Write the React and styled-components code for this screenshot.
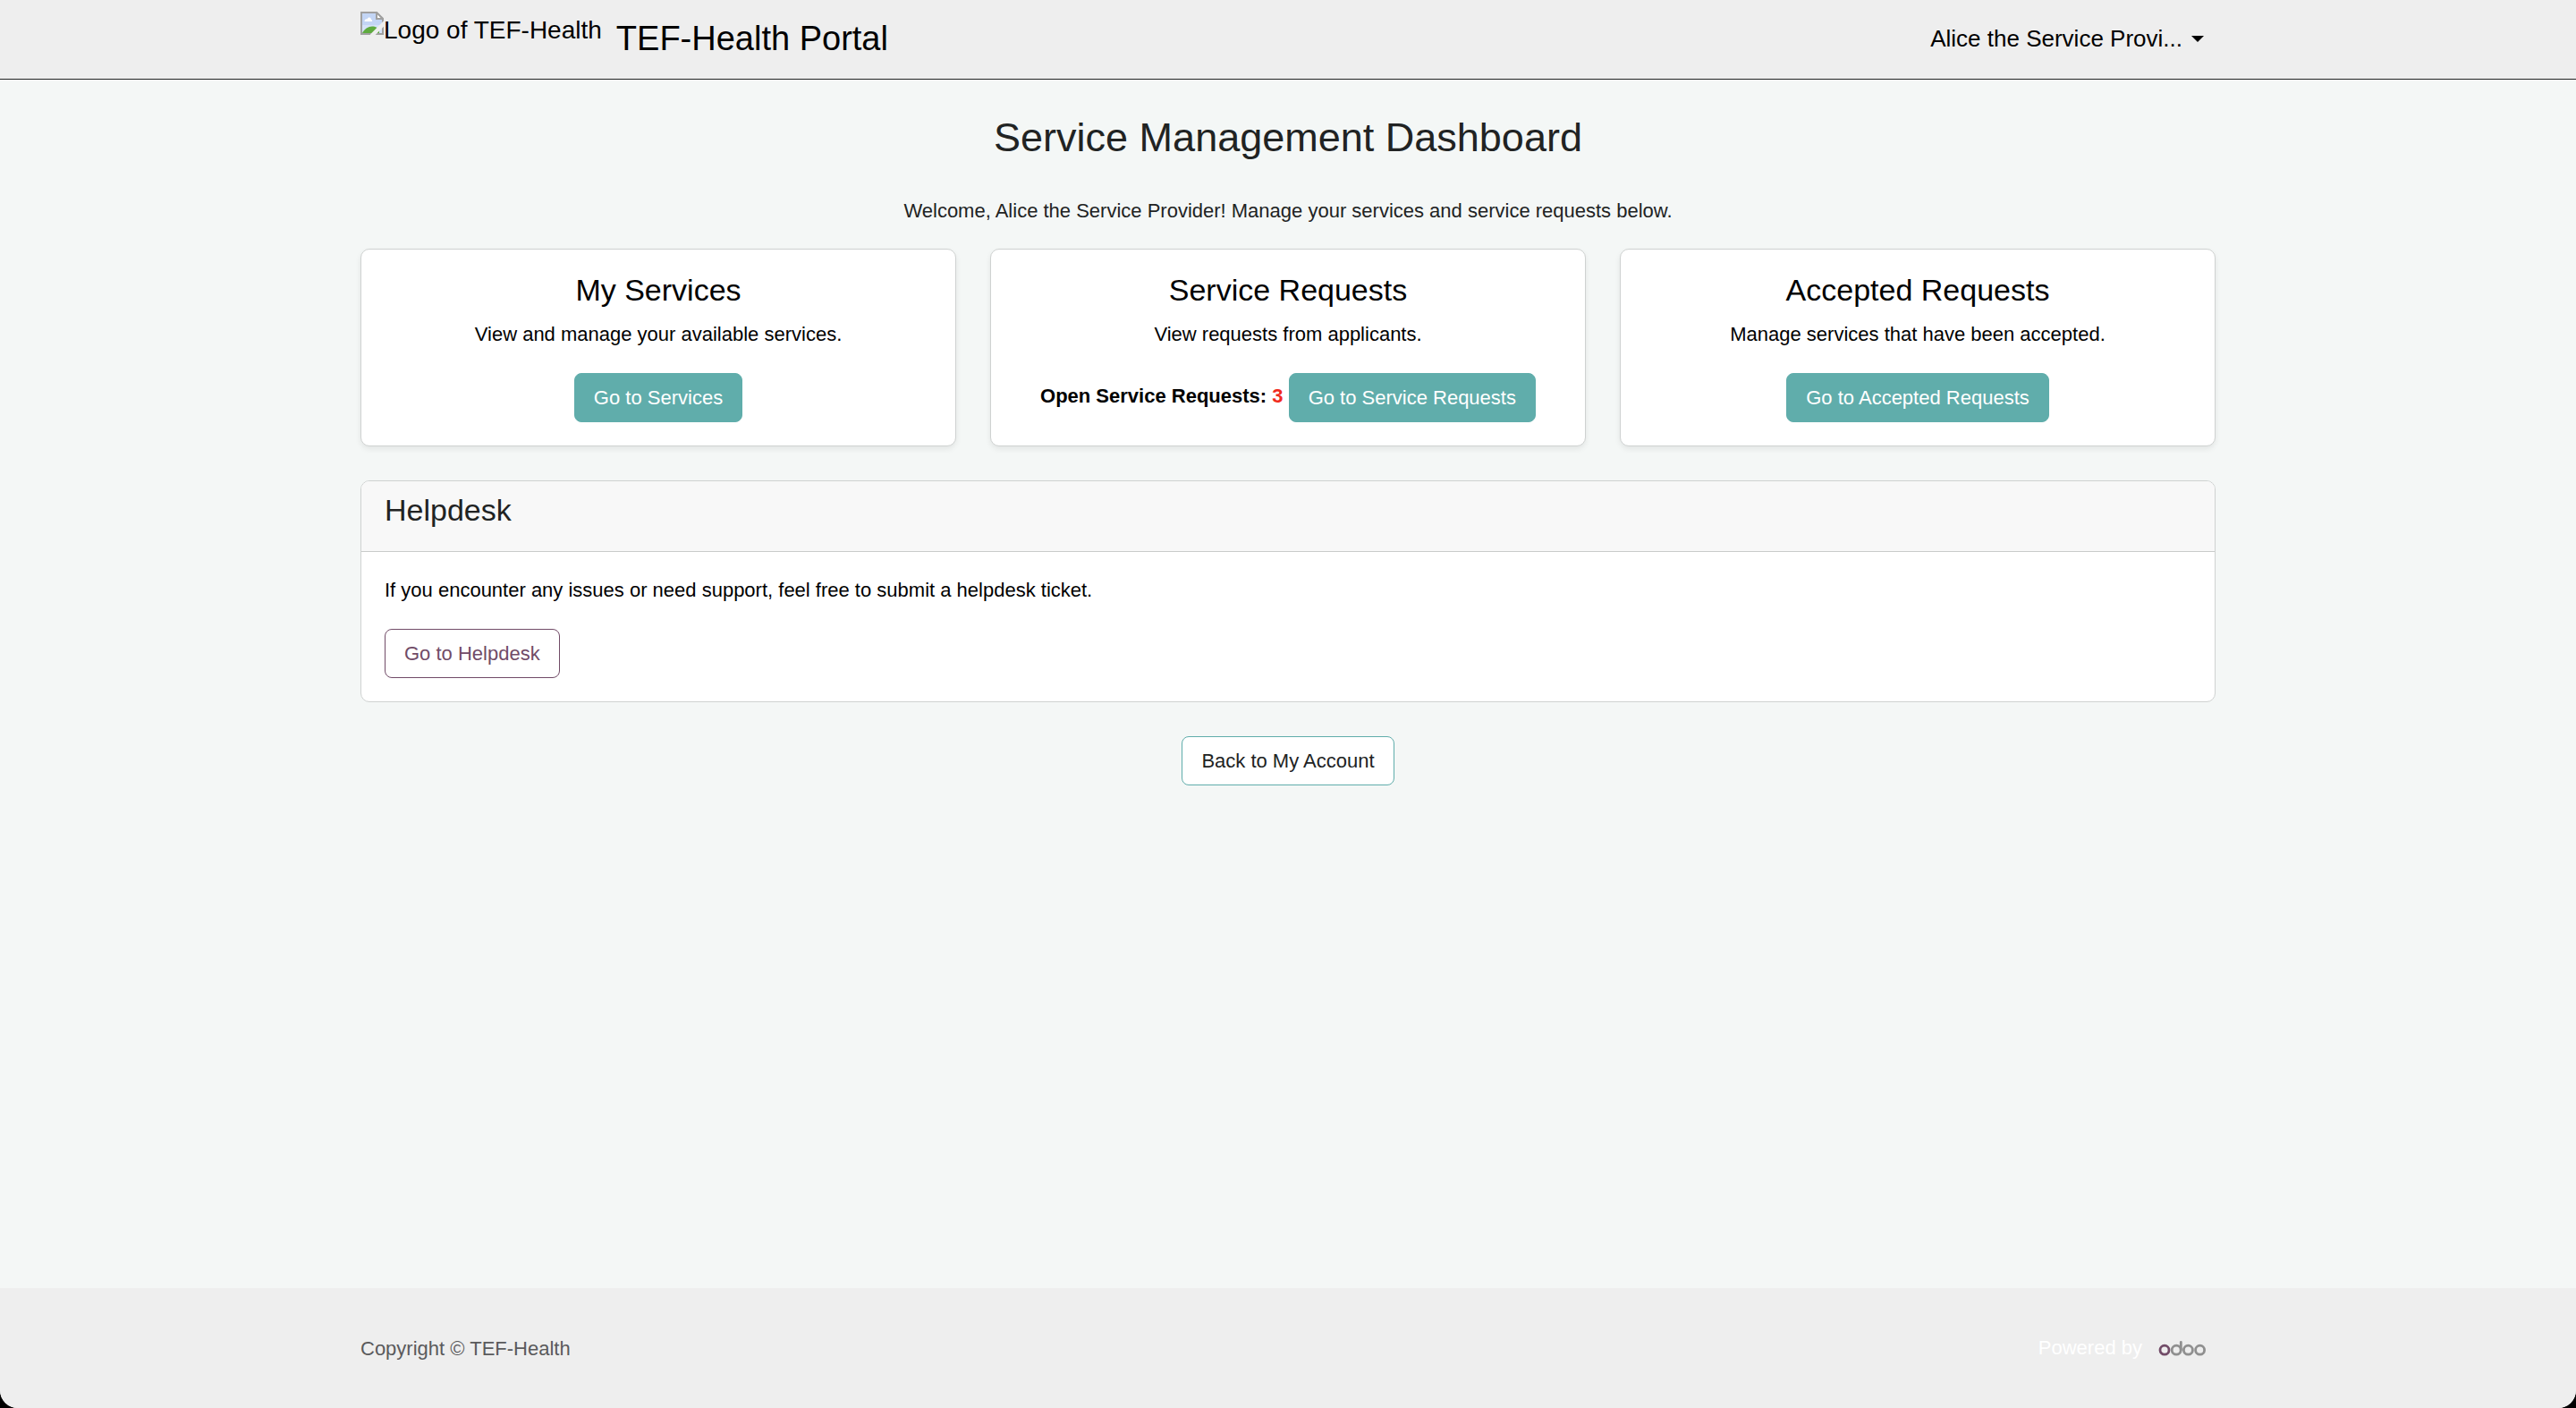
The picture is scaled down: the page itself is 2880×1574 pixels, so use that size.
import React from "react";
import styled, { createGlobalStyle } from "styled-components";

const GlobalStyle = createGlobalStyle`
  *, *::before, *::after { box-sizing: border-box; }
  body {
    margin: 0;
    background: #000;
    color: #212323;
    font-family: "Liberation Sans", Arial, sans-serif;
    font-size: 22px;
    line-height: 34px;
  }
  h1, h2, p { margin: 0; font-weight: 400; }
`;

const Page = styled.div`
  display: flex;
  flex-direction: column;
  min-height: 100vh;
  background: #f4f7f6;
  border-radius: 0 0 20px 20px;
  overflow: hidden;
`;

const Container = styled.div`
  width: 100%;
  max-width: 2112px;
  margin: 0 auto;
  padding: 0 19px;
`;

const Header = styled.header`
  background: #eee;
  border-bottom: 1px solid #212323;
  padding: 13px 0 15px;
`;

const HeaderBar = styled(Container)`
  display: flex;
  align-items: center;
`;

const LogoLink = styled.a`
  display: flex;
  align-self: flex-start;
  align-items: flex-start;
  margin-right: 16px;
  color: #000;
  font-size: 28px;
  line-height: 42px;
  text-decoration: none;
`;

const Brand = styled.a`
  color: #000;
  font-size: 38px;
  line-height: 60px;
  text-decoration: none;
`;

const UserMenu = styled.button`
  display: flex;
  align-items: center;
  gap: 10px;
  margin-left: auto;
  padding: 0 13px;
  border: 0;
  background: none;
  color: #000;
  font: inherit;
  font-size: 26px;
  line-height: 39px;
`;

const Caret = styled.span`
  border-top: 7px solid;
  border-left: 7px solid transparent;
  border-right: 7px solid transparent;
`;

const Main = styled.main`
  flex: 1;
  padding: 38px 0;
`;

const Content = styled(Container)`
  display: flex;
  flex-direction: column;
`;

const Title = styled.h1`
  font-size: 45px;
  line-height: 54px;
  text-align: center;
`;

const Welcome = styled.p`
  margin: 38px 0 25px;
  text-align: center;
`;

const CardGrid = styled.div`
  display: grid;
  grid-template-columns: repeat(3, 1fr);
  gap: 38px;
`;

const Card = styled.section`
  padding: 26px;
  background: #fff;
  border: 1px solid #cfd2d1;
  border-radius: 10px;
  box-shadow: 0 3px 6px rgba(0, 0, 0, 0.075);
  color: #000;
  text-align: center;
`;

const Heading = styled.h2`
  margin-bottom: 14px;
  font-size: 34px;
  line-height: 38px;
`;

const Text = styled.p`
  margin-bottom: 26px;
`;

const Actions = styled.div`
  line-height: 34px;
`;

const Count = styled.span`
  color: #f02a1d;
`;

const palettes = {
  solid: { fill: "#60adab", line: "#60adab", ink: "#fff" },
  plum: { fill: "#fff", line: "#714b67", ink: "#714b67" },
  teal: { fill: "#fff", line: "#60adab", ink: "#212323" },
};

const ButtonLink = styled.a`
  display: inline-block;
  padding: 10px 21px 9px;
  vertical-align: middle;
  background: ${({ $kind }) => palettes[$kind].fill};
  border: 1px solid ${({ $kind }) => palettes[$kind].line};
  border-radius: 8px;
  color: ${({ $kind }) => palettes[$kind].ink};
  text-decoration: none;
`;

const Panel = styled.section`
  margin: 38px 0;
  background: #fff;
  border: 1px solid #cfd2d1;
  border-radius: 10px;
  overflow: hidden;
`;

const PanelHeader = styled.header`
  padding: 13px 26px;
  background: #f8f8f8;
  border-bottom: 1px solid #c9cbca;
`;

const PanelBody = styled.div`
  padding: 26px;
  color: #000;
`;

const BackRow = styled.div`
  text-align: center;
`;

const Footer = styled.footer`
  padding: 51px 0 49px;
  background: #eee;
`;

const FooterBar = styled(Container)`
  display: flex;
  align-items: flex-start;
  justify-content: space-between;
  color: #5a5a5c;
`;

const Powered = styled.div`
  display: flex;
  align-items: center;
  gap: 18px;
  padding-right: 10px;
  color: #fff;
  line-height: 32px;
`;

const OdooLink = styled.a`
  display: flex;
`;

function BrokenImage() {
  return (
    <svg width="26" height="26" viewBox="0 0 26 26" aria-hidden="true">
      <path d="M1 1H18L25 8V25H1Z" fill="#c3d5f5" stroke="#a0a0a0" strokeWidth="2" />
      <path d="M2 15H24V24H2Z" fill="#d5e2f8" />
      <path d="M4.500 11c0-2 1.500-3 3-2.500 1-3 4.500-2.500 4.500 0.500 1.500 0 1.500 2 0.500 2z" fill="#fff" />
      <path d="M2 24C4 19.500 9 16.500 13 16.500c4 0 7 2 8 4.500v3z" fill="#5fab3f" />
      <path d="M18 1V8H25Z" fill="#fff" stroke="#a0a0a0" strokeWidth="2" />
      <path d="M28 11.500L12.500 27" stroke="#eee" strokeWidth="4.500" />
    </svg>
  );
}

function OdooLogo() {
  return (
    <svg width="54" height="18" viewBox="0 0 54 18" fill="none" strokeWidth="2.8" role="img" aria-label="Odoo">
      <g stroke="#8f8f8f">
        <circle cx="20.2" cy="11.2" r="5" />
        <circle cx="33.4" cy="11.2" r="5" />
        <circle cx="46.6" cy="11.2" r="5" />
        <path d="M25.3 11V2.4" strokeLinecap="round" />
      </g>
      <circle cx="7" cy="11.2" r="5" stroke="#714b67" />
    </svg>
  );
}

const cards = [
  { title: "My Services", text: "View and manage your available services.", action: "Go to Services" },
  { title: "Service Requests", text: "View requests from applicants.", action: "Go to Service Requests", open: 3 },
  { title: "Accepted Requests", text: "Manage services that have been accepted.", action: "Go to Accepted Requests" },
];

export default function App() {
  return (
    <>
      <GlobalStyle />
      <Page>
        <Header>
          <HeaderBar>
            <LogoLink href="#home">
              <BrokenImage />
              Logo of TEF-Health
            </LogoLink>
            <Brand href="#home">TEF-Health Portal</Brand>
            <UserMenu type="button" aria-haspopup="menu">
              Alice the Service Provi...
              <Caret />
            </UserMenu>
          </HeaderBar>
        </Header>
        <Main>
          <Content>
            <Title>Service Management Dashboard</Title>
            <Welcome>
              Welcome, Alice the Service Provider! Manage your services and service requests below.
            </Welcome>
            <CardGrid>
              {cards.map(({ title, text, action, open }) => (
                <Card key={title}>
                  <Heading>{title}</Heading>
                  <Text>{text}</Text>
                  <Actions>
                    {open && (
                      <>
                        <strong>
                          Open Service Requests: <Count>{open}</Count>
                        </strong>{" "}
                      </>
                    )}
                    <ButtonLink $kind="solid" href="#services">{action}</ButtonLink>
                  </Actions>
                </Card>
              ))}
            </CardGrid>
            <Panel>
              <PanelHeader>
                <Heading>Helpdesk</Heading>
              </PanelHeader>
              <PanelBody>
                <Text>If you encounter any issues or need support, feel free to submit a helpdesk ticket.</Text>
                <Actions>
                  <ButtonLink $kind="plum" href="#helpdesk">Go to Helpdesk</ButtonLink>
                </Actions>
              </PanelBody>
            </Panel>
            <BackRow>
              <ButtonLink $kind="teal" href="#account">Back to My Account</ButtonLink>
            </BackRow>
          </Content>
        </Main>
        <Footer>
          <FooterBar>
            <span>Copyright © TEF-Health</span>
            <Powered>
              Powered by
              <OdooLink href="#odoo"><OdooLogo /></OdooLink>
            </Powered>
          </FooterBar>
        </Footer>
      </Page>
    </>
  );
}
